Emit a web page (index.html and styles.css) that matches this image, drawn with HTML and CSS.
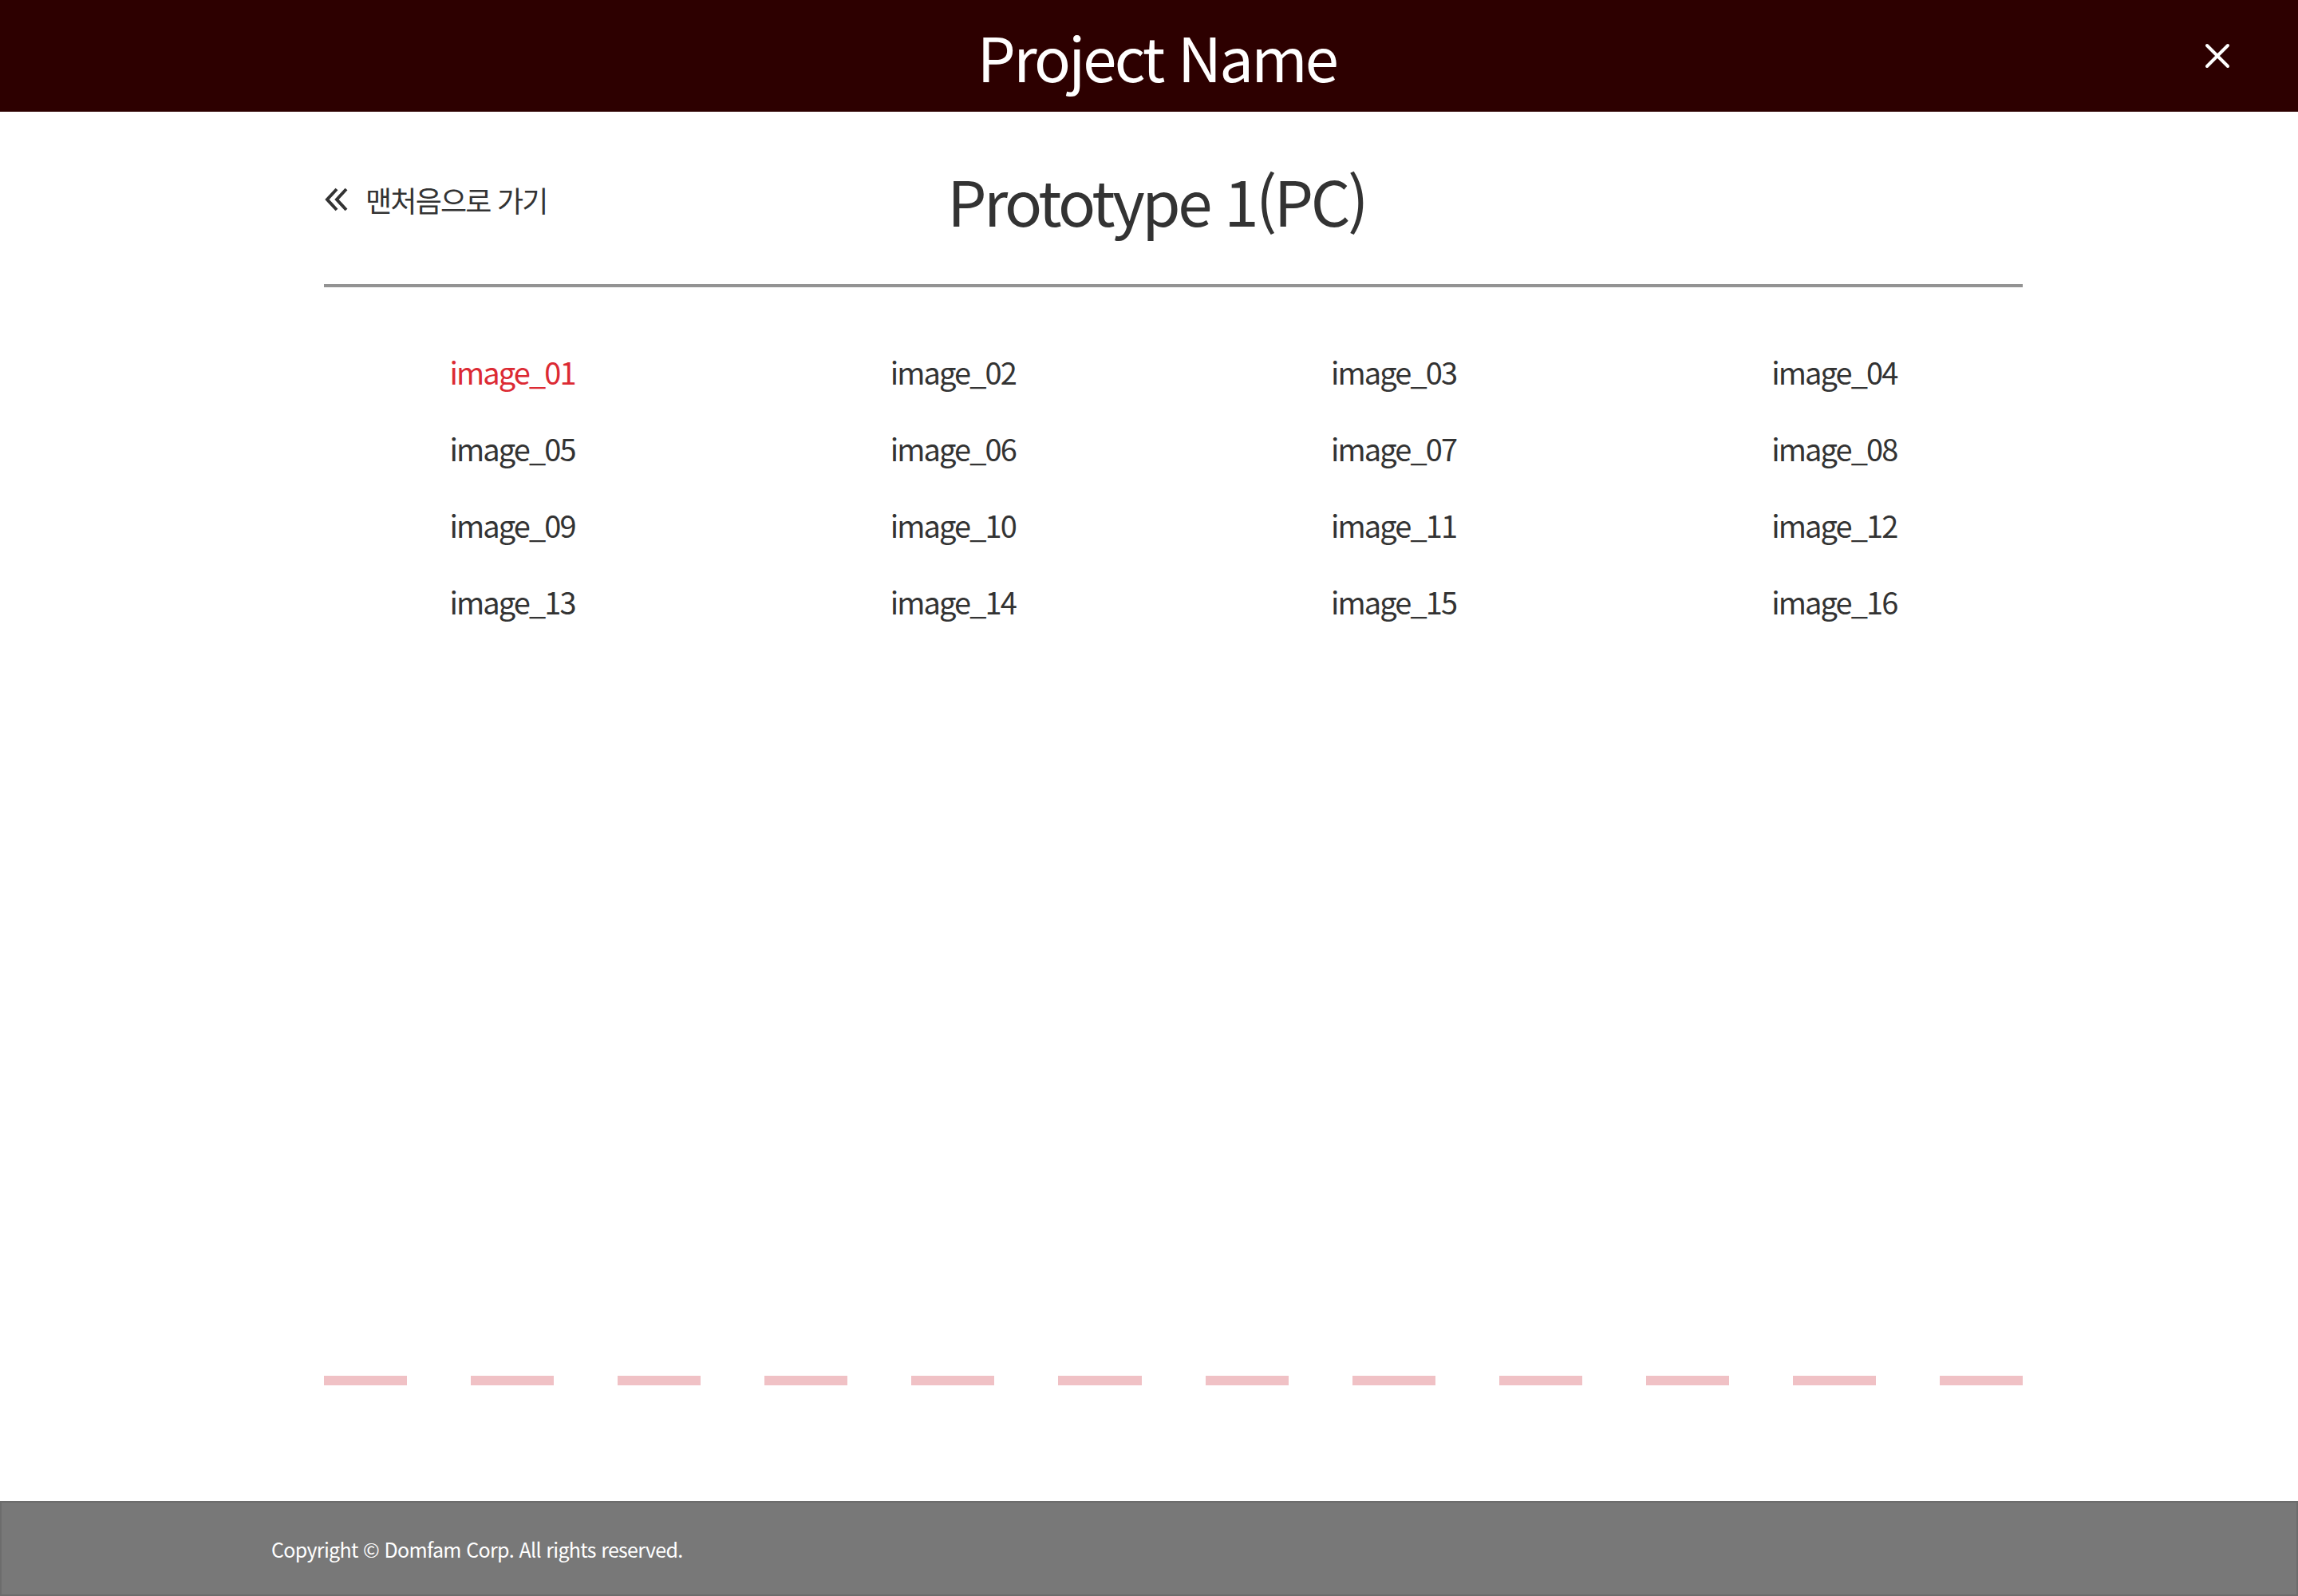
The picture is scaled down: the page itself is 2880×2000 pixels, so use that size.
FILE: index.html
```html
<!DOCTYPE html>
<html lang="ko">
<head>
<meta charset="utf-8">
<title>Prototype 1(PC)</title>
<link rel="stylesheet" href="styles.css">
</head>
<body>
<header class="topbar">
  <div class="topbar-side"></div>
  <h1 class="project-name">Project Name</h1>
  <div class="topbar-side topbar-side--end">
    <button class="close-btn" aria-label="닫기">
      <svg viewBox="0 0 32 32" width="32" height="32"><path d="M3 3 L29 29 M29 3 L3 29" stroke="#fff" stroke-width="4" stroke-linecap="round" fill="none"/></svg>
    </button>
  </div>
</header>

<main class="main">
  <div class="container">
    <div class="title-row">
      <a class="back-link" href="#">
        <svg class="back-icon" viewBox="0 0 32 32" width="32" height="32"><path d="M16 3 L4 16 L16 29 M28 3 L16 16 L28 29" stroke="#333" stroke-width="4" stroke-linecap="butt" stroke-linejoin="miter" fill="none"/></svg>
        <span>맨처음으로 가기</span>
      </a>
      <h2 class="page-title">Prototype 1(PC)</h2>
      <div></div>
    </div>
    <div class="divider"></div>

    <ul class="image-grid">
      <li><a class="image-link is-active" href="#">image_01</a></li>
      <li><a class="image-link" href="#">image_02</a></li>
      <li><a class="image-link" href="#">image_03</a></li>
      <li><a class="image-link" href="#">image_04</a></li>
      <li><a class="image-link" href="#">image_05</a></li>
      <li><a class="image-link" href="#">image_06</a></li>
      <li><a class="image-link" href="#">image_07</a></li>
      <li><a class="image-link" href="#">image_08</a></li>
      <li><a class="image-link" href="#">image_09</a></li>
      <li><a class="image-link" href="#">image_10</a></li>
      <li><a class="image-link" href="#">image_11</a></li>
      <li><a class="image-link" href="#">image_12</a></li>
      <li><a class="image-link" href="#">image_13</a></li>
      <li><a class="image-link" href="#">image_14</a></li>
      <li><a class="image-link" href="#">image_15</a></li>
      <li><a class="image-link" href="#">image_16</a></li>
    </ul>

    <div class="dashes">
      <span></span><span></span><span></span><span></span><span></span><span></span>
      <span></span><span></span><span></span><span></span><span></span><span></span>
    </div>
  </div>
</main>

<footer class="footer">
  <p class="copyright">Copyright © Domfam Corp. All rights reserved.</p>
</footer>
</body>
</html>
```

FILE: styles.css
```css
* { box-sizing: border-box; }

html, body {
  margin: 0;
  padding: 0;
}

body {
  min-height: 100vh;
  display: flex;
  flex-direction: column;
  background: #fff;
  font-family: "Noto Sans CJK KR", "Noto Sans", sans-serif;
  color: #333;
}

.topbar {
  height: 140px;
  background: #2d0000;
  display: grid;
  grid-template-columns: 1fr auto 1fr;
  align-items: center;
  flex: none;
}

.project-name {
  margin: 0 0 0 20px;
  color: #fff;
  font-weight: 400;
  font-size: 76px;
  line-height: 140px;
  letter-spacing: -2.8px;
}

.topbar-side--end {
  display: flex;
  justify-content: flex-end;
  padding-right: 85px;
}

.close-btn {
  border: 0;
  background: none;
  padding: 0;
  width: 32px;
  height: 32px;
  display: block;
  cursor: pointer;
}

.close-btn svg { display: block; }

.main {
  flex: 1;
  display: flex;
}

.container {
  width: 2129px;
  margin-left: 406px;
  display: flex;
  flex-direction: column;
}

.title-row {
  display: grid;
  grid-template-columns: 1fr auto 1fr;
  align-items: center;
  height: 100px;
  margin: 60px 0 56px;
}

.back-link {
  display: flex;
  align-items: center;
  gap: 20px;
  color: #333;
  text-decoration: none;
  font-size: 36px;
  letter-spacing: -0.05em;
}

.back-icon { display: block; }

.page-title {
  margin: 0 42px 0 0;
  font-weight: 400;
  font-size: 78px;
  color: #333;
  line-height: 100px;
  letter-spacing: -3.5px;
}

.divider {
  height: 4px;
  background: #939393;
}

.image-grid {
  list-style: none;
  margin: 58px 0 0;
  padding: 0;
  display: grid;
  grid-template-columns: repeat(4, 1fr);
  column-gap: 80px;
}

.image-grid li {
  text-align: center;
  line-height: 96px;
  height: 96px;
}

.image-link {
  color: #333;
  text-decoration: none;
  font-size: 38px;
  letter-spacing: -0.05em;
}

.image-link.is-active { color: #dc2a33; }

.dashes {
  margin-top: auto;
  margin-bottom: 145px;
  display: grid;
  grid-template-columns: repeat(12, 1fr);
  column-gap: 80px;
}

.dashes span {
  height: 12px;
  background: #f0c1c5;
}

.footer {
  flex: none;
  height: 119px;
  background: #787878;
  border: 2px solid #6c6c6c;
  display: flex;
  align-items: center;
  padding-left: 338px;
}

.copyright {
  margin: 0;
  color: #fff;
  font-size: 25px;
  letter-spacing: -0.67px;
}
```
